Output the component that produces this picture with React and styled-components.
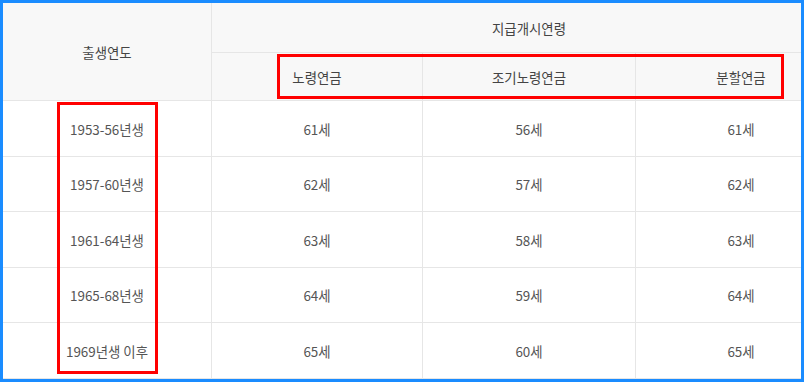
import React from 'react'
import styled, { createGlobalStyle } from 'styled-components'

const GlobalStyle = createGlobalStyle`
  html, body {
    margin: 0;
    padding: 0;
    background: #ffffff;
  }
  body {
    font-family: 'Noto Sans CJK KR', 'Noto Sans', sans-serif;
  }
`

const Page = styled.div`
  width: 806px;
  height: 383px;
  overflow: hidden;
  background: #fff;
`

const Frame = styled.div`
  position: relative;
  box-sizing: border-box;
  width: 804px;
  height: 382px;
  border: 3px solid #1a8cff;
  overflow: hidden;
`

const Grid = styled.div`
  display: grid;
  width: 843px;
  grid-template-columns: 208px 211px 213px 211px;
  grid-template-rows: 50px 48px 56px 55px 56px 55px 56px;
  color: #555;
  font-size: 13.4px;
`

const Cell = styled.div`
  display: flex;
  align-items: center;
  justify-content: center;
  box-sizing: border-box;
  border-bottom: 1px solid #e6e6e6;
  border-left: ${p => (p.$first ? 'none' : '1px solid #e6e6e6')};
  background: ${p => (p.$head ? '#f8f8f8' : '#fff')};
  color: ${p => (p.$head ? '#444' : '#555')};
  grid-row: ${p => p.$row || 'auto'};
  grid-column: ${p => p.$col || 'auto'};
`

const Mark = styled.div`
  position: absolute;
  box-sizing: border-box;
  border: 3px solid #ff0000;
  left: ${p => p.$x}px;
  top: ${p => p.$y}px;
  width: ${p => p.$w}px;
  height: ${p => p.$h}px;
  pointer-events: none;
`

const rows = [
  ['1953-56년생', '61세', '56세', '61세'],
  ['1957-60년생', '62세', '57세', '62세'],
  ['1961-64년생', '63세', '58세', '63세'],
  ['1965-68년생', '64세', '59세', '64세'],
  ['1969년생 이후', '65세', '60세', '65세']
]

export default function App() {
  return (
    <Page>
      <GlobalStyle />
      <Frame>
        <Grid>
          <Cell $head $first $row='1 / 3' $col='1'>출생연도</Cell>
          <Cell $head $row='1' $col='2 / 5'>지급개시연령</Cell>
          <Cell $head $row='2' $col='2'>노령연금</Cell>
          <Cell $head $row='2' $col='3'>조기노령연금</Cell>
          <Cell $head $row='2' $col='4'>분할연금</Cell>
          {rows.map(r =>
            r.map((v, i) => (
              <Cell key={r[0] + i} $first={i === 0}>
                {v}
              </Cell>
            ))
          )}
        </Grid>
        <Mark $x={54} $y={99} $w={101} $h={272} />
        <Mark $x={274} $y={51} $w={507} $h={45} />
      </Frame>
    </Page>
  )
}
